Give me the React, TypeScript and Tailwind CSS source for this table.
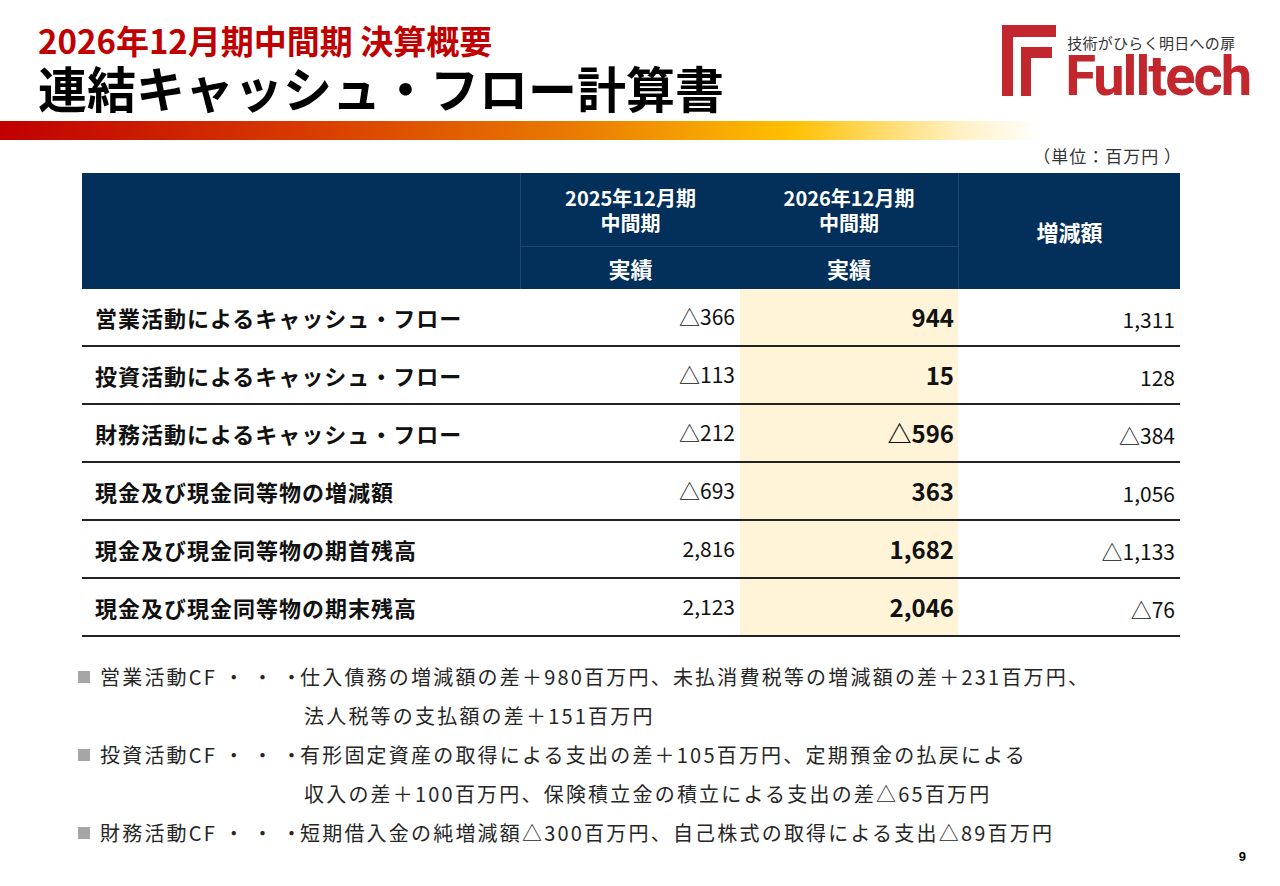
import React from "react";

const jp = { fontFamily: '"Noto Sans CJK JP", "Noto Sans", sans-serif' };

const rows = [
  { label: "営業活動によるキャッシュ・フロー", prev: "△366", cur: "944", diff: "1,311" },
  { label: "投資活動によるキャッシュ・フロー", prev: "△113", cur: "15", diff: "128" },
  { label: "財務活動によるキャッシュ・フロー", prev: "△212", cur: "△596", diff: "△384" },
  { label: "現金及び現金同等物の増減額", prev: "△693", cur: "363", diff: "1,056" },
  { label: "現金及び現金同等物の期首残高", prev: "2,816", cur: "1,682", diff: "△1,133" },
  { label: "現金及び現金同等物の期末残高", prev: "2,123", cur: "2,046", diff: "△76" },
];

const notes = [
  {
    head: "営業活動CF ・ ・ ・",
    lines: [
      "仕入債務の増減額の差＋980百万円、未払消費税等の増減額の差＋231百万円、",
      "法人税等の支払額の差＋151百万円",
    ],
  },
  {
    head: "投資活動CF ・ ・ ・",
    lines: [
      "有形固定資産の取得による支出の差＋105百万円、定期預金の払戻による",
      "収入の差＋100百万円、保険積立金の積立による支出の差△65百万円",
    ],
  },
  {
    head: "財務活動CF ・ ・ ・",
    lines: ["短期借入金の純増減額△300百万円、自己株式の取得による支出△89百万円"],
  },
];

const Logo = () => (
  <div className="flex items-start gap-[11px] mt-[25px] mr-[30px]">
    <svg width="54" height="72" viewBox="0 0 54 72">
      <path d="M0 0H54V12H11V71H0Z" fill="#c1272d" />
      <path d="M19 22H50V33H29V71H19Z" fill="#c1272d" />
    </svg>
    <div className="flex flex-col">
      <div className="text-[15px] leading-[20px] text-[#333] mt-[8px] tracking-[0.3px]" style={jp}>
        技術がひらく明日への扉
      </div>
      <div
        className="text-[56px] leading-[66px] -mt-[10px] -mb-[10px] font-bold text-[#c1272d] tracking-[-2px] -ml-[2px]"
        style={{ fontFamily: "Roboto, sans-serif" }}
      >
        Fulltech
      </div>
    </div>
  </div>
);

export default function App() {
  return (
    <div className="w-[1280px] h-[886px] bg-white overflow-hidden text-[#111]" style={jp}>
      {/* Header */}
      <div className="flex justify-between">
        <div className="pl-[38px] pt-[22px]">
          <div className="text-[33px] leading-[36px] font-bold text-[#c00000]">2026年12月期中間期 決算概要</div>
          <div className="text-[49px] leading-[56px] font-bold text-black mt-[1px]">
            連結キャッシュ・フロー計算書
          </div>
        </div>
        <Logo />
      </div>

      <div className="mt-[6px] h-[19px] w-[1040px] bg-[linear-gradient(90deg,#c00000_0%,#d83c00_30%,#e97a00_55%,#ffc000_76%,#fff0c0_92%,#ffffff_100%)]" />

      <div className="mt-[6px] pr-[98px] text-right text-[17px] leading-[20px] text-[#333] tracking-[1px]">
        （単位：百万円 ）
      </div>

      {/* Table */}
      <div className="mt-[7px] ml-[82px] w-[1098px]">
        <div className="grid grid-cols-[438px_220px_218px_222px] bg-[#03305a] text-white font-bold">
          <div className="row-span-2" />
          <div className="h-[74px] flex flex-col justify-center items-center text-[20px] leading-[25px] border-l border-b border-[#1d4670]">
            <span>2025年12月期</span>
            <span>中間期</span>
          </div>
          <div className="h-[74px] flex flex-col justify-center items-center text-[20px] leading-[25px] border-b border-[#1d4670]">
            <span>2026年12月期</span>
            <span>中間期</span>
          </div>
          <div className="row-span-2 flex items-center justify-center text-[22px] border-l border-[#1d4670]">増減額</div>
          <div className="h-[42px] flex items-center justify-center text-[22px] border-l border-[#1d4670]">実績</div>
          <div className="h-[42px] flex items-center justify-center text-[22px]">実績</div>
        </div>

        {rows.map((r) => (
          <div
            key={r.label}
            className="grid grid-cols-[438px_220px_218px_222px] h-[58px] border-b-2 border-[#222]"
          >
            <div className="flex items-center pl-[13px] text-[22px] font-bold tracking-[1px]">{r.label}</div>
            <div className="flex items-center justify-end pr-[5px] text-[21px]">{r.prev}</div>
            <div className="flex items-center justify-end pr-[4px] text-[24px] font-bold bg-[#fff3d8]">{r.cur}</div>
            <div className="flex items-center justify-end pr-[5px] pt-[5px] text-[21px]">{r.diff}</div>
          </div>
        ))}
      </div>

      {/* Notes */}
      <div className="mt-[20px] ml-[78px] text-[20px] leading-[39px] text-[#262626] tracking-[2.2px]">
        {notes.map((n) => (
          <div key={n.head} className="grid grid-cols-[222px_1fr] items-start">
            <div className="flex items-center h-[39px] whitespace-pre">
              <span className="inline-block shrink-0 w-[12px] h-[12px] bg-[#a6a6a6] mr-[10px]" />
              {n.head}
            </div>
            <div className="flex flex-col">
              {n.lines.map((l, i) => (
                <div key={l} className={i === 0 ? "" : "pl-[4px]"}>
                  {l}
                </div>
              ))}
            </div>
          </div>
        ))}
      </div>

      <div
        className="flex justify-end pr-[34px] -mt-[3px] text-[13px] leading-[16px] font-bold text-black"
        style={{ fontFamily: '"Liberation Sans", Arial, sans-serif' }}
      >
        9
      </div>
    </div>
  );
}
